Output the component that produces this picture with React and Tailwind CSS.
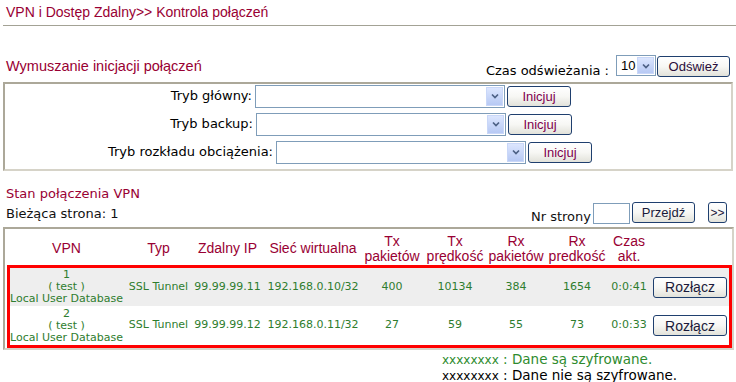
import React from 'react';

const arial = "font-['Liberation_Sans',Arial,sans-serif]";
const verdana = "font-['DejaVu_Sans',Verdana,sans-serif]";

const heads = [
  ['VPN'],
  ['Typ'],
  ['Zdalny IP'],
  ['Sieć wirtualna'],
  ['Tx', 'pakietów'],
  ['Tx', 'prędkość'],
  ['Rx', 'pakietów'],
  ['Rx', 'predkość'],
  ['Czas', 'akt.'],
  [],
];

const sessions = [
  { id: '1', ip: '99.99.99.11', net: '192.168.0.10/32', tx: '400', txs: '10134', rx: '384', rxs: '1654', up: '0:0:41' },
  { id: '2', ip: '99.99.99.12', net: '192.168.0.11/32', tx: '27', txs: '59', rx: '55', rxs: '73', up: '0:0:33' },
];

const cols = 'grid grid-cols-[113px_71px_67px_104px_54px_72px_50px_72px_32px_1fr]';

function Arrow() {
  return (
    <span className="flex h-full w-[17px] items-center justify-center border border-[#c9d7f8] bg-linear-to-b from-[#dce6fe] to-[#b7c9f4]">
      <svg width="8" height="6" viewBox="0 0 8 6">
        <path d="M1 1.5 L4 4.5 L7 1.5" stroke="#4d6185" strokeWidth="1.7" fill="none" />
      </svg>
    </span>
  );
}

function Select({ className, children }) {
  return (
    <div className={`flex items-center justify-between border border-[#7f9db9] bg-white p-px ${className}`}>
      <span className={`pl-[3px] text-[13px] text-black ${arial}`}>{children}</span>
      <Arrow />
    </div>
  );
}

function Btn({ className, children }) {
  return (
    <button className={`flex items-center justify-center rounded-[3px] border border-[#1f3f6e] bg-linear-to-b from-white via-[#f7f7f4] to-[#e2e2da] leading-none ${arial} ${className}`}>
      {children}
    </button>
  );
}

function Cell({ children }) {
  return <div className="flex min-w-0 items-center justify-center whitespace-nowrap">{children}</div>;
}

export default function App() {
  return (
    <div className={`h-[382px] w-[736px] overflow-hidden bg-white ${verdana}`}>
      <div className={`pl-[6px] pt-[4px] text-[14px] leading-[16px] text-[#990033] ${arial}`}>
        VPN i Dostęp Zdalny&gt;&gt; Kontrola połączeń
      </div>
      <div className="ml-[3px] mt-[5px] h-px bg-[#a3a295]" />

      <div className="mt-[28px] flex h-[24px] items-start justify-between pl-[6px] pr-[6px]">
        <div className={`mt-[4px] text-[14.5px] leading-[16px] text-[#990033] ${arial}`}>Wymuszanie inicjacji połączeń</div>
        <div className="flex items-start">
          <span className="mr-[7px] mt-[9px] text-[13px] leading-[15px] text-black">Czas odświeżania :</span>
          <Select className="mt-[1px] h-[21px] w-[40px]">10</Select>
          <Btn className="ml-[1px] mt-[2px] h-[21px] w-[73px] text-[13px] text-[#2a0d3a]">Odśwież</Btn>
        </div>
      </div>

      <div className="ml-[3px] mt-[4px] flex h-[89px] w-[730px] flex-col gap-[6px] border-2 border-[#aca899] border-b-[#d6d3c8] border-r-[#d6d3c8] pt-px">
        {[
          ['Tryb główny:', 'pr-[160px]'],
          ['Tryb backup:', 'pr-[159px]'],
          ['Tryb rozkładu obciążenia:', 'pr-[139px]'],
        ].map(([label, pr]) => (
          <div key={label} className={`flex h-[22px] items-center justify-end ${pr}`}>
            <span className="mr-[3px] text-[13px] text-black">{label}</span>
            <Select className="h-[23px] w-[250px]" />
            <Btn className="ml-[2px] h-[21px] w-[64px] text-[13px] text-[#80004f]">Inicjuj</Btn>
          </div>
        ))}
      </div>

      <div className="mt-[15px] pl-[6px] text-[13px] leading-[15px] text-[#990033]">Stan połączenia VPN</div>

      <div className="flex h-[24px] items-start justify-between pl-[6px] pr-[9px]">
        <span className="mt-[5px] text-[13px] leading-[15px] text-[#111]">Bieżąca strona: 1</span>
        <div className="flex items-start">
          <span className="mt-[8px] text-[13px] leading-[15px] text-[#111]">Nr strony</span>
          <div className="ml-[2px] mt-[2px] h-[21px] w-[37px] border border-[#7f9db9] bg-white" />
          <Btn className="ml-[2px] mt-px h-[21px] w-[63px] text-[13px] text-[#1a1a3a]">Przejdź</Btn>
          <Btn className="ml-[13px] mt-px h-[21px] w-[19px] text-[12px] text-[#1a1a3a]">&gt;&gt;</Btn>
        </div>
      </div>

      <div className="ml-[3px] mt-[2px] h-[123px] w-[731px] border-2 border-[#aca899] border-b-[#d6d3c8] border-r-[#d6d3c8] pl-[2px]">
        <div className={`${cols} h-[36px] pl-[3px] pt-[3px] text-[14px] leading-[15px] text-[#990033] ${arial}`}>
          {heads.map((h, i) => (
            <Cell key={i}>
              <div className="flex flex-col items-center">
                {h.map((t) => (
                  <span key={t}>{t}</span>
                ))}
              </div>
            </Cell>
          ))}
        </div>
        <div className="h-[83px] border-[3px] border-[#ff0000] text-[11px] text-[#2e7d2e]">
          {sessions.map((s, i) => (
            <div key={s.id} className={`${cols} ${i === 0 ? 'h-[38px] bg-[#eeeeee]' : 'h-[39px] bg-white'}`}>
              <Cell>
                <div className="flex flex-col items-center leading-[12px]">
                  <span>{s.id}</span>
                  <span>( test )</span>
                  <span>Local User Database</span>
                </div>
              </Cell>
              <Cell>SSL Tunnel</Cell>
              <Cell>{s.ip}</Cell>
              <Cell>{s.net}</Cell>
              <Cell>{s.tx}</Cell>
              <Cell>{s.txs}</Cell>
              <Cell>{s.rx}</Cell>
              <Cell>{s.rxs}</Cell>
              <Cell>{s.up}</Cell>
              <div className="flex items-center pl-[8px]">
                <Btn className="h-[21px] w-[74px] text-[14px] text-[#1a1a3a]">Rozłącz</Btn>
              </div>
            </div>
          ))}
        </div>
      </div>

      <div className="pl-[442px] pt-[1px] text-[13.5px] leading-[16px]">
        <div className="flex items-baseline text-[#2e8b2e]">
          <span className="text-[12px] leading-none">xxxxxxxx</span>
          <span className="whitespace-pre"> : Dane są szyfrowane.</span>
        </div>
        <div className="flex items-baseline text-black">
          <span className="text-[12px] leading-none">xxxxxxxx</span>
          <span className="whitespace-pre"> : Dane nie są szyfrowane.</span>
        </div>
      </div>
    </div>
  );
}
